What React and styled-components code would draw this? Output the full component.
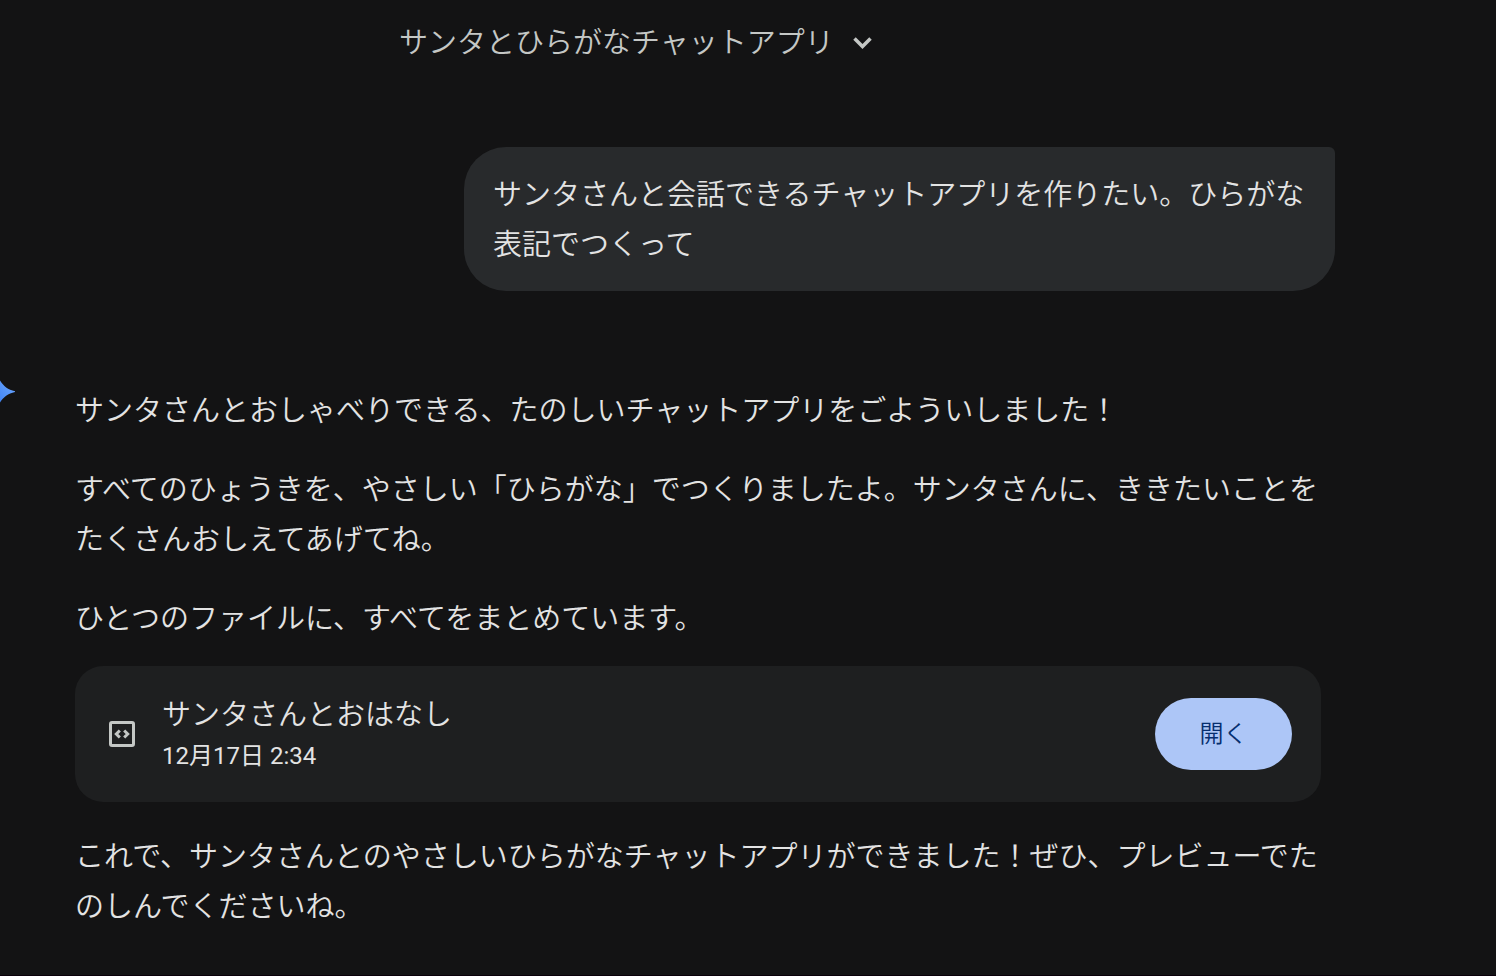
import React from 'react';
import styled, { createGlobalStyle } from 'styled-components';

const GlobalStyle = createGlobalStyle`
  * {
    box-sizing: border-box;
  }
  body {
    margin: 0;
    background: #131314;
    color: #e3e3e3;
    font-family: 'Noto Sans CJK JP', sans-serif;
    font-size: 29px;
    font-weight: 350;
    line-height: 50px;
  }
`;

const Page = styled.div`
  min-height: 100vh;
  overflow: hidden;
  border-bottom: 1px solid #0a000a;
`;

const Header = styled.header`
  display: flex;
  padding: 15px 0 0 399px;
`;

const TitleButton = styled.button`
  display: flex;
  align-items: center;
  gap: 16px;
  padding: 0;
  border: none;
  background: transparent;
  color: #c4c7c5;
  font: inherit;
  cursor: pointer;
`;

const Conversation = styled.main`
  display: flex;
  flex-direction: column;
  gap: 88px;
  padding: 82px 161px 40px 0;
`;

const UserMessage = styled.p`
  align-self: flex-end;
  max-width: 871px;
  margin: 0;
  padding: 20px 28px 24px 29px;
  border-radius: 42px 6px 42px 42px;
  background: #282a2c;
`;

const Reply = styled.article`
  display: flex;
  align-items: flex-start;
`;

const Gutter = styled.div`
  flex: 0 0 75px;
  display: flex;
`;

const ReplyBody = styled.div`
  flex: 1;
  min-width: 0;
  padding-top: 4px;
`;

const Paragraph = styled.p`
  margin: 0 0 29px;
  &:last-child {
    margin-bottom: 0;
  }
`;

const FileCard = styled.section`
  display: flex;
  align-items: center;
  gap: 26px;
  margin: -4px 14px 27px 0;
  padding: 24px 29px 24px 33px;
  border-radius: 28px;
  background: #1e1f20;
`;

const FileInfo = styled.div`
  flex: 1;
  display: flex;
  flex-direction: column;
  line-height: 44px;
`;

const FileName = styled.div`
  font-size: 29px;
`;

const FileDate = styled.time`
  font-family: Roboto, 'Noto Sans CJK JP', sans-serif;
  font-size: 24px;
  font-weight: 400;
`;

const OpenButton = styled.button`
  width: 137px;
  height: 72px;
  padding: 0 0 4px;
  border: none;
  border-radius: 36px;
  background: #adc6f7;
  color: #062e6f;
  font: inherit;
  font-size: 24px;
  cursor: pointer;
`;

const ChevronIcon = () => (
  <svg width="28" height="28" viewBox="0 0 28 28" fill="none" stroke="currentColor" strokeWidth="3.500" aria-hidden="true">
    <path d="M4.500 12.500l8 8 8-8" />
  </svg>
);

const SparkIcon = () => (
  <svg width="16" height="24" viewBox="0 0 16 24" aria-hidden="true">
    <defs>
      <linearGradient id="spark" x1="0" y1="1" x2="1" y2="0">
        <stop offset="0" stopColor="#4285f4" />
        <stop offset="1" stopColor="#6ea8ff" />
      </linearGradient>
    </defs>
    <path d="M0 1.500C3.500 7 8 11 15 12.200v.8C8 14.500 3.500 18 0 23.500z" fill="url(#spark)" />
  </svg>
);

const CodeIcon = () => (
  <svg width="28" height="28" viewBox="0 0 28 28" fill="none" stroke="#c4c7c5" strokeWidth="3" aria-hidden="true">
    <rect x="2.500" y="2.500" width="23" height="23" rx="1.500" />
    <path d="M11.800 10.500L8.300 14l3.500 3.500M16.200 10.500L19.700 14l-3.500 3.500" />
  </svg>
);

const App = () => {
  return (
    <Page>
      <GlobalStyle />
      <Header>
        <TitleButton type="button">
          サンタとひらがなチャットアプリ
          <ChevronIcon />
        </TitleButton>
      </Header>
      <Conversation>
        <UserMessage>
          サンタさんと会話できるチャットアプリを作りたい。ひらがな表記でつくって
        </UserMessage>
        <Reply>
          <Gutter>
            <SparkIcon />
          </Gutter>
          <ReplyBody>
            <Paragraph>サンタさんとおしゃべりできる、たのしいチャットアプリをごよういしました！</Paragraph>
            <Paragraph>
              すべてのひょうきを、やさしい「ひらがな」でつくりましたよ。サンタさんに、ききたいことをたくさんおしえてあげてね。
            </Paragraph>
            <Paragraph>ひとつのファイルに、すべてをまとめています。</Paragraph>
            <FileCard>
              <CodeIcon />
              <FileInfo>
                <FileName>サンタさんとおはなし</FileName>
                <FileDate>12月17日 2:34</FileDate>
              </FileInfo>
              <OpenButton type="button">開く</OpenButton>
            </FileCard>
            <Paragraph>
              これで、サンタさんとのやさしいひらがなチャットアプリができました！ぜひ、プレビューでたのしんでくださいね。
            </Paragraph>
          </ReplyBody>
        </Reply>
      </Conversation>
    </Page>
  );
};

export default App;
